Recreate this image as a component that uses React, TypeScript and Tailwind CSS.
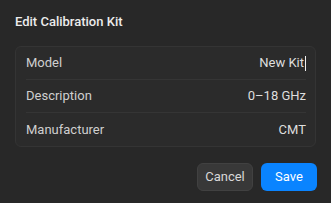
import React from 'react'

const rows = [
  { label: 'Model', value: 'New Kit', editing: true },
  { label: 'Description', value: '0–18 GHz' },
  { label: 'Manufacturer', value: 'CMT' },
]

export default function App() {
  return (
    <div
      className="w-[331px] h-[203px] bg-[#282828] px-[15px] pt-[14px] text-[#e5e5e5] antialiased"
      style={{ fontFamily: 'Roboto, "Noto Sans", sans-serif' }}
    >
      <h2 className="text-[13px] font-medium leading-[16px] text-[#ececec]">Edit Calibration Kit</h2>

      <div className="mt-[16px] rounded-[6px] border border-[#343434] bg-[#2b2b2b]">
        {rows.map((row, i) => (
          <div
            key={row.label}
            className={`flex h-[33px] items-center justify-between ml-[10px] mr-[9px] text-[13px] ${
              i < rows.length - 1 ? 'border-b border-[#353535]' : ''
            }`}
          >
            <span className="text-[#cfcfcf]">{row.label}</span>
            <span className="flex items-center text-[#dedede]">
              {row.value}
              {row.editing && <span className="ml-[1px] inline-block h-[15px] w-[1px] bg-[#f0f0f0]" />}
            </span>
          </div>
        ))}
      </div>

      <div className="mt-[16px] flex justify-end gap-[8px]">
        <button className="h-[28px] w-[56px] rounded-[6px] border border-[#414141] bg-[#383838] text-[13px] text-[#d8d8d8]">
          Cancel
        </button>
        <button className="mr-[-1px] h-[28px] w-[56px] rounded-[6px] bg-[#0a84ff] text-[13px] text-white">
          Save
        </button>
      </div>
    </div>
  )
}
